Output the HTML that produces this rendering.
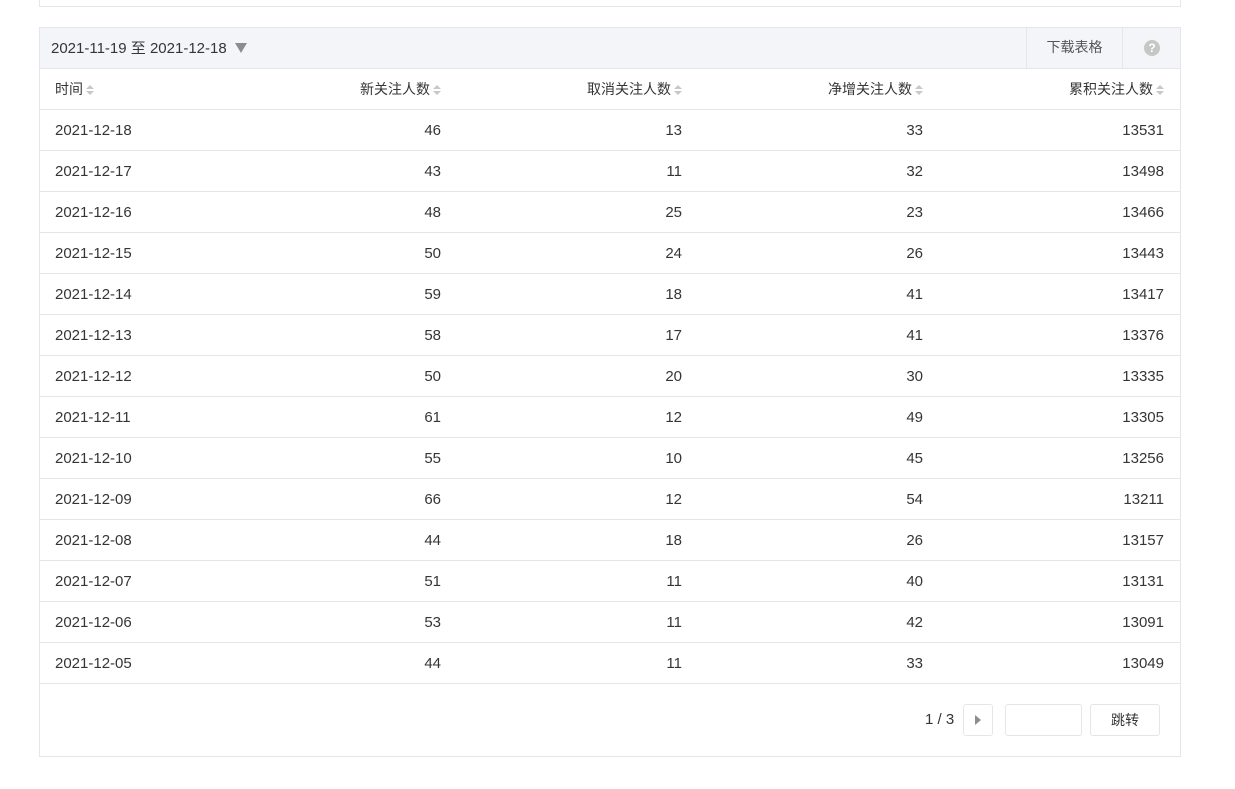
<!DOCTYPE html>
<html><head><meta charset="utf-8"><style>
*{margin:0;padding:0;box-sizing:border-box}
body{width:1235px;height:789px;background:#fff;font-family:"Liberation Sans","Noto Sans CJK SC",sans-serif;font-size:15px;color:#353535;position:relative;overflow:hidden}
.top{position:absolute;left:39px;top:-2px;width:1142px;height:9px;border:1px solid #e4e6eb;border-top:none}
.box{position:absolute;left:39px;top:27px;width:1142px;height:730px;border:1px solid #e4e6eb}
.bar{height:41px;background:#f4f5f9;border-bottom:1px solid #e4e6eb;position:relative}
.date{position:absolute;left:11px;top:9px;font-size:15px;color:#353535}
.tri{display:inline-block;width:0;height:0;border-left:6px solid transparent;border-right:6px solid transparent;border-top:10px solid #8d8d8d;margin-left:8px;vertical-align:0px}
.dl{position:absolute;left:986px;top:0;width:97px;height:40px;border-left:1px solid #e4e6eb;border-right:1px solid #e4e6eb;text-align:center;line-height:39px;color:#555;font-size:14px}
.help{position:absolute;left:1104px;top:12px;width:16px;height:16px;border-radius:50%;background:#c6c6c6;color:#fff;font-size:12px;font-weight:bold;text-align:center;line-height:16px}
table{border-collapse:collapse;width:1140px;table-layout:fixed;margin-top:-1px}
td,th{height:41px;border-bottom:1px solid #e4e6eb;padding:2px 16px 0 15px;text-align:right;font-weight:normal;white-space:nowrap}
th{font-size:14px;color:#353535}
td:first-child,th:first-child{text-align:left}
.s{display:inline-block;width:8px;height:10px;position:relative;margin-left:3px;vertical-align:-1px}
.s:before,.s:after{content:"";position:absolute;left:0;border-left:4px solid transparent;border-right:4px solid transparent}
.s:before{top:0;border-bottom:4px solid #c8c8c8}
.s:after{top:6px;border-top:4px solid #c8c8c8}
.pg{position:absolute;left:0;top:656px;width:1140px;height:72px}
.pn{position:absolute;left:885px;top:27px;color:#353535}
.b{position:absolute;top:20px;height:32px;border:1px solid #e4e6eb;border-radius:3px;background:#fff}
</style></head><body>
<div class="top"></div>
<div class="box">
<div class="bar"><span class="date">2021-11-19 至 2021-12-18<span class="tri"></span></span><div class="dl">下载表格</div><div class="help">?</div></div>
<table>
<colgroup><col style="width:176px"><col style="width:241px"><col style="width:241px"><col style="width:241px"><col style="width:241px"></colgroup>
<tr><th>时间<span class="s"></span></th><th>新关注人数<span class="s"></span></th><th>取消关注人数<span class="s"></span></th><th>净增关注人数<span class="s"></span></th><th>累积关注人数<span class="s"></span></th></tr>
<tr><td>2021-12-18</td><td>46</td><td>13</td><td>33</td><td>13531</td></tr>
<tr><td>2021-12-17</td><td>43</td><td>11</td><td>32</td><td>13498</td></tr>
<tr><td>2021-12-16</td><td>48</td><td>25</td><td>23</td><td>13466</td></tr>
<tr><td>2021-12-15</td><td>50</td><td>24</td><td>26</td><td>13443</td></tr>
<tr><td>2021-12-14</td><td>59</td><td>18</td><td>41</td><td>13417</td></tr>
<tr><td>2021-12-13</td><td>58</td><td>17</td><td>41</td><td>13376</td></tr>
<tr><td>2021-12-12</td><td>50</td><td>20</td><td>30</td><td>13335</td></tr>
<tr><td>2021-12-11</td><td>61</td><td>12</td><td>49</td><td>13305</td></tr>
<tr><td>2021-12-10</td><td>55</td><td>10</td><td>45</td><td>13256</td></tr>
<tr><td>2021-12-09</td><td>66</td><td>12</td><td>54</td><td>13211</td></tr>
<tr><td>2021-12-08</td><td>44</td><td>18</td><td>26</td><td>13157</td></tr>
<tr><td>2021-12-07</td><td>51</td><td>11</td><td>40</td><td>13131</td></tr>
<tr><td>2021-12-06</td><td>53</td><td>11</td><td>42</td><td>13091</td></tr>
<tr><td>2021-12-05</td><td>44</td><td>11</td><td>33</td><td>13049</td></tr>
</table>
<div class="pg">
<span class="pn">1 / 3</span>
<div class="b" style="left:923px;width:30px"><span style="position:absolute;left:11px;top:10px;border-top:5px solid transparent;border-bottom:5px solid transparent;border-left:6px solid #8d8d8d"></span></div>
<div class="b" style="left:965px;width:77px"></div>
<div class="b" style="left:1050px;width:70px;text-align:center;line-height:30px;font-size:14px">跳转</div>
</div>
</div>
</body></html>
